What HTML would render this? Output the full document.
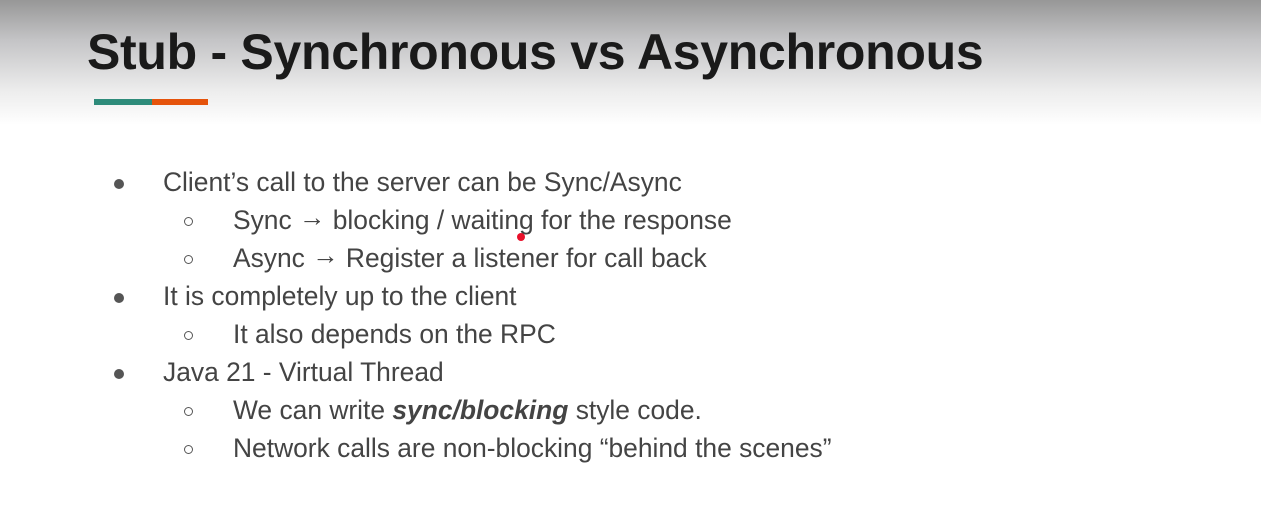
<!DOCTYPE html>
<html><head><style>
body{margin:0;width:1261px;height:524px;overflow:hidden;background:linear-gradient(to bottom,#979797 0px,#c4c4c6 40px,#ececec 90px,#fff 125px,#fff 100%);font-family:"Liberation Sans",sans-serif;position:relative}
h1{position:absolute;left:87px;top:23px;margin:0;font-size:50px;font-weight:bold;color:#1a1a1a;white-space:nowrap;letter-spacing:-0.3px}
.bar{position:absolute;top:99px;height:6px}
.l{position:absolute;font-size:26.4px;color:#444;white-space:nowrap;line-height:30px}
.a{position:relative;top:-3px}
.b{position:absolute;width:10px;height:10px;border-radius:50%;background:#555}
.c{position:absolute;width:9px;height:9px;border-radius:50%;border:1.3px solid #555;box-sizing:border-box}
</style></head><body>
<h1>Stub - Synchronous vs Asynchronous</h1>
<div class="bar" style="left:94px;width:58px;background:#2e8b7a"></div>
<div class="bar" style="left:152px;width:56px;background:#e5530b"></div>

<div class="b" style="left:114px;top:179px"></div><div class="l" style="left:163px;top:167px">Client’s call to the server can be Sync/Async</div>
<div class="c" style="left:184px;top:217px"></div><div class="l" style="left:233px;top:205px">Sync <span class="a">→</span> blocking / waiting for the response</div>
<div class="c" style="left:184px;top:255px"></div><div class="l" style="left:233px;top:243px">Async <span class="a">→</span> Register a listener for call back</div>
<div class="b" style="left:114px;top:293px"></div><div class="l" style="left:163px;top:281px">It is completely up to the client</div>
<div class="c" style="left:184px;top:331px"></div><div class="l" style="left:233px;top:319px">It also depends on the RPC</div>
<div class="b" style="left:114px;top:369px"></div><div class="l" style="left:163px;top:357px">Java 21 - Virtual Thread</div>
<div class="c" style="left:184px;top:407px"></div><div class="l" style="left:233px;top:395px">We can write <b><i>sync/blocking</i></b> style code.</div>
<div class="c" style="left:184px;top:445px"></div><div class="l" style="left:233px;top:433px">Network calls are non-blocking “behind the scenes”</div>
<div style="position:absolute;left:517px;top:233px;width:8px;height:8px;border-radius:50%;background:#e8102a"></div>
</body></html>
